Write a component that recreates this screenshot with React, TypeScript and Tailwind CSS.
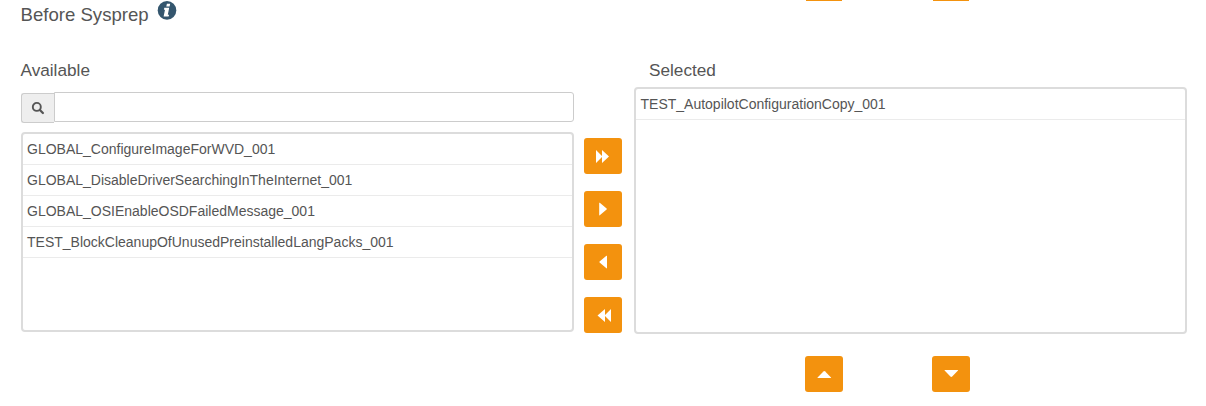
import type { ReactNode } from 'react';

const available = [
  'GLOBAL_ConfigureImageForWVD_001',
  'GLOBAL_DisableDriverSearchingInTheInternet_001',
  'GLOBAL_OSIEnableOSDFailedMessage_001',
  'TEST_BlockCleanupOfUnusedPreinstalledLangPacks_001',
];
const selected = ['TEST_AutopilotConfigurationCopy_001'];

function IconButton({ label, children }: { label: string; children: ReactNode }) {
  return (
    <button
      type="button"
      aria-label={label}
      className="h-9 w-[38px] shrink-0 rounded-[3px] bg-[#f3920e] text-white"
    >
      <svg viewBox="0 0 38 36" className="block h-9 w-[38px]" fill="currentColor">
        {children}
      </svg>
    </button>
  );
}

function List({ items, className }: { items: string[]; className: string }) {
  return (
    <ul className={`overflow-hidden rounded-[4px] border-2 border-[#dcdcdc] ${className}`}>
      {items.map((item) => (
        <li
          key={item}
          className="h-[31px] border-b border-[#ebebeb] text-[14px] leading-[30px]"
        >
          {item}
        </li>
      ))}
    </ul>
  );
}

export default function App() {
  return (
    <main className="h-[406px] w-[1206px] overflow-hidden bg-white font-['Liberation_Sans',Arial,sans-serif] text-[#555]">
      <div className="flex h-px gap-[91px] overflow-hidden pl-[806px]">
        <div className="h-px w-9 bg-[#f3920e]" />
        <div className="h-px w-9 bg-[#f3920e]" />
      </div>
      <h2 className="flex h-[57px] pl-[20.5px] text-[18.6px] leading-[27px]">
        Before Sysprep
        <svg viewBox="0 0 20 20" className="ml-2 h-5 w-5" aria-label="Information">
          <circle cx="10" cy="9.4" r="9.3" fill="#34566e" />
          <path d="M9.9 2.7h3.3l-.6 2.9H9.3zM7.3 6.8h4.9l-1.4 6.9h1.3l-.5 1.9H6.6l1.4-6.9H6.9z" fill="#fff" />
        </svg>
      </h2>
      <div className="flex pl-[21px]">
        <section className="w-[553px]">
          <h3 className="-ml-[0.5px] h-[34px] text-[17.2px] leading-[25px]">Available</h3>
          <div className="flex h-10">
            <span className="mt-px flex h-[30px] w-[33px] items-center justify-center rounded-l-[3px] border border-r-0 border-[#ccc] bg-[#eee]">
              <svg viewBox="0 0 14 14" className="h-3.5 w-3.5" fill="none" stroke="currentColor">
                <circle cx="5.8" cy="5.9" r="4" strokeWidth="1.9" />
                <path d="M8.9 9l3 3" strokeWidth="2.3" strokeLinecap="round" />
              </svg>
            </span>
            <input
              aria-label="Search available"
              className="h-[30px] w-[520px] rounded-r-[3px] border border-[#ccc] px-2 text-[14px] outline-none"
            />
          </div>
          <List items={available} className="h-[200px] pl-0 *:pl-1" />
        </section>
        <div className="ml-[10px] flex w-[38px] flex-col gap-[17px] pt-20">
          <IconButton label="Add all">
            <path d="M12 12l6 6v-6l7 6.5-7 6.5v-6l-6 6z" />
          </IconButton>
          <IconButton label="Add">
            <path d="M15.2 12q0-.6.6-.2l6.8 5.7q.6.5 0 1l-6.8 5.8q-.6.4-.6-.2z" />
          </IconButton>
          <IconButton label="Remove">
            <path d="M23 12q0-.6-.6-.2l-6.8 5.7q-.6.5 0 1l6.8 5.8q.6.4.6-.2z" />
          </IconButton>
          <IconButton label="Remove all">
            <path d="M27 12v13l-6-6v6l-7.5-6.5L21 12v6z" />
          </IconButton>
        </div>
        <section className="ml-3 w-[553px]">
          <h3 className="h-[29px] pl-[15px] text-[17.2px] leading-[25px]">Selected</h3>
          <List items={selected} className="h-[247px] *:pl-[4.5px]" />
          <div className="mt-[22px] flex gap-[89px] pl-[171px]">
            <IconButton label="Move up">
              <path d="M12.8 22q-.6 0-.2-.6l5.8-5.9q.9-.8 1.8 0l5.8 5.9q.4.6-.2.6z" />
            </IconButton>
            <IconButton label="Move down">
              <path d="M12.8 14h13q.6 0 .2.6l-5.8 5.9q-.9.8-1.8 0l-5.8-5.9q-.4-.6.2-.6z" />
            </IconButton>
          </div>
        </section>
      </div>
    </main>
  );
}
